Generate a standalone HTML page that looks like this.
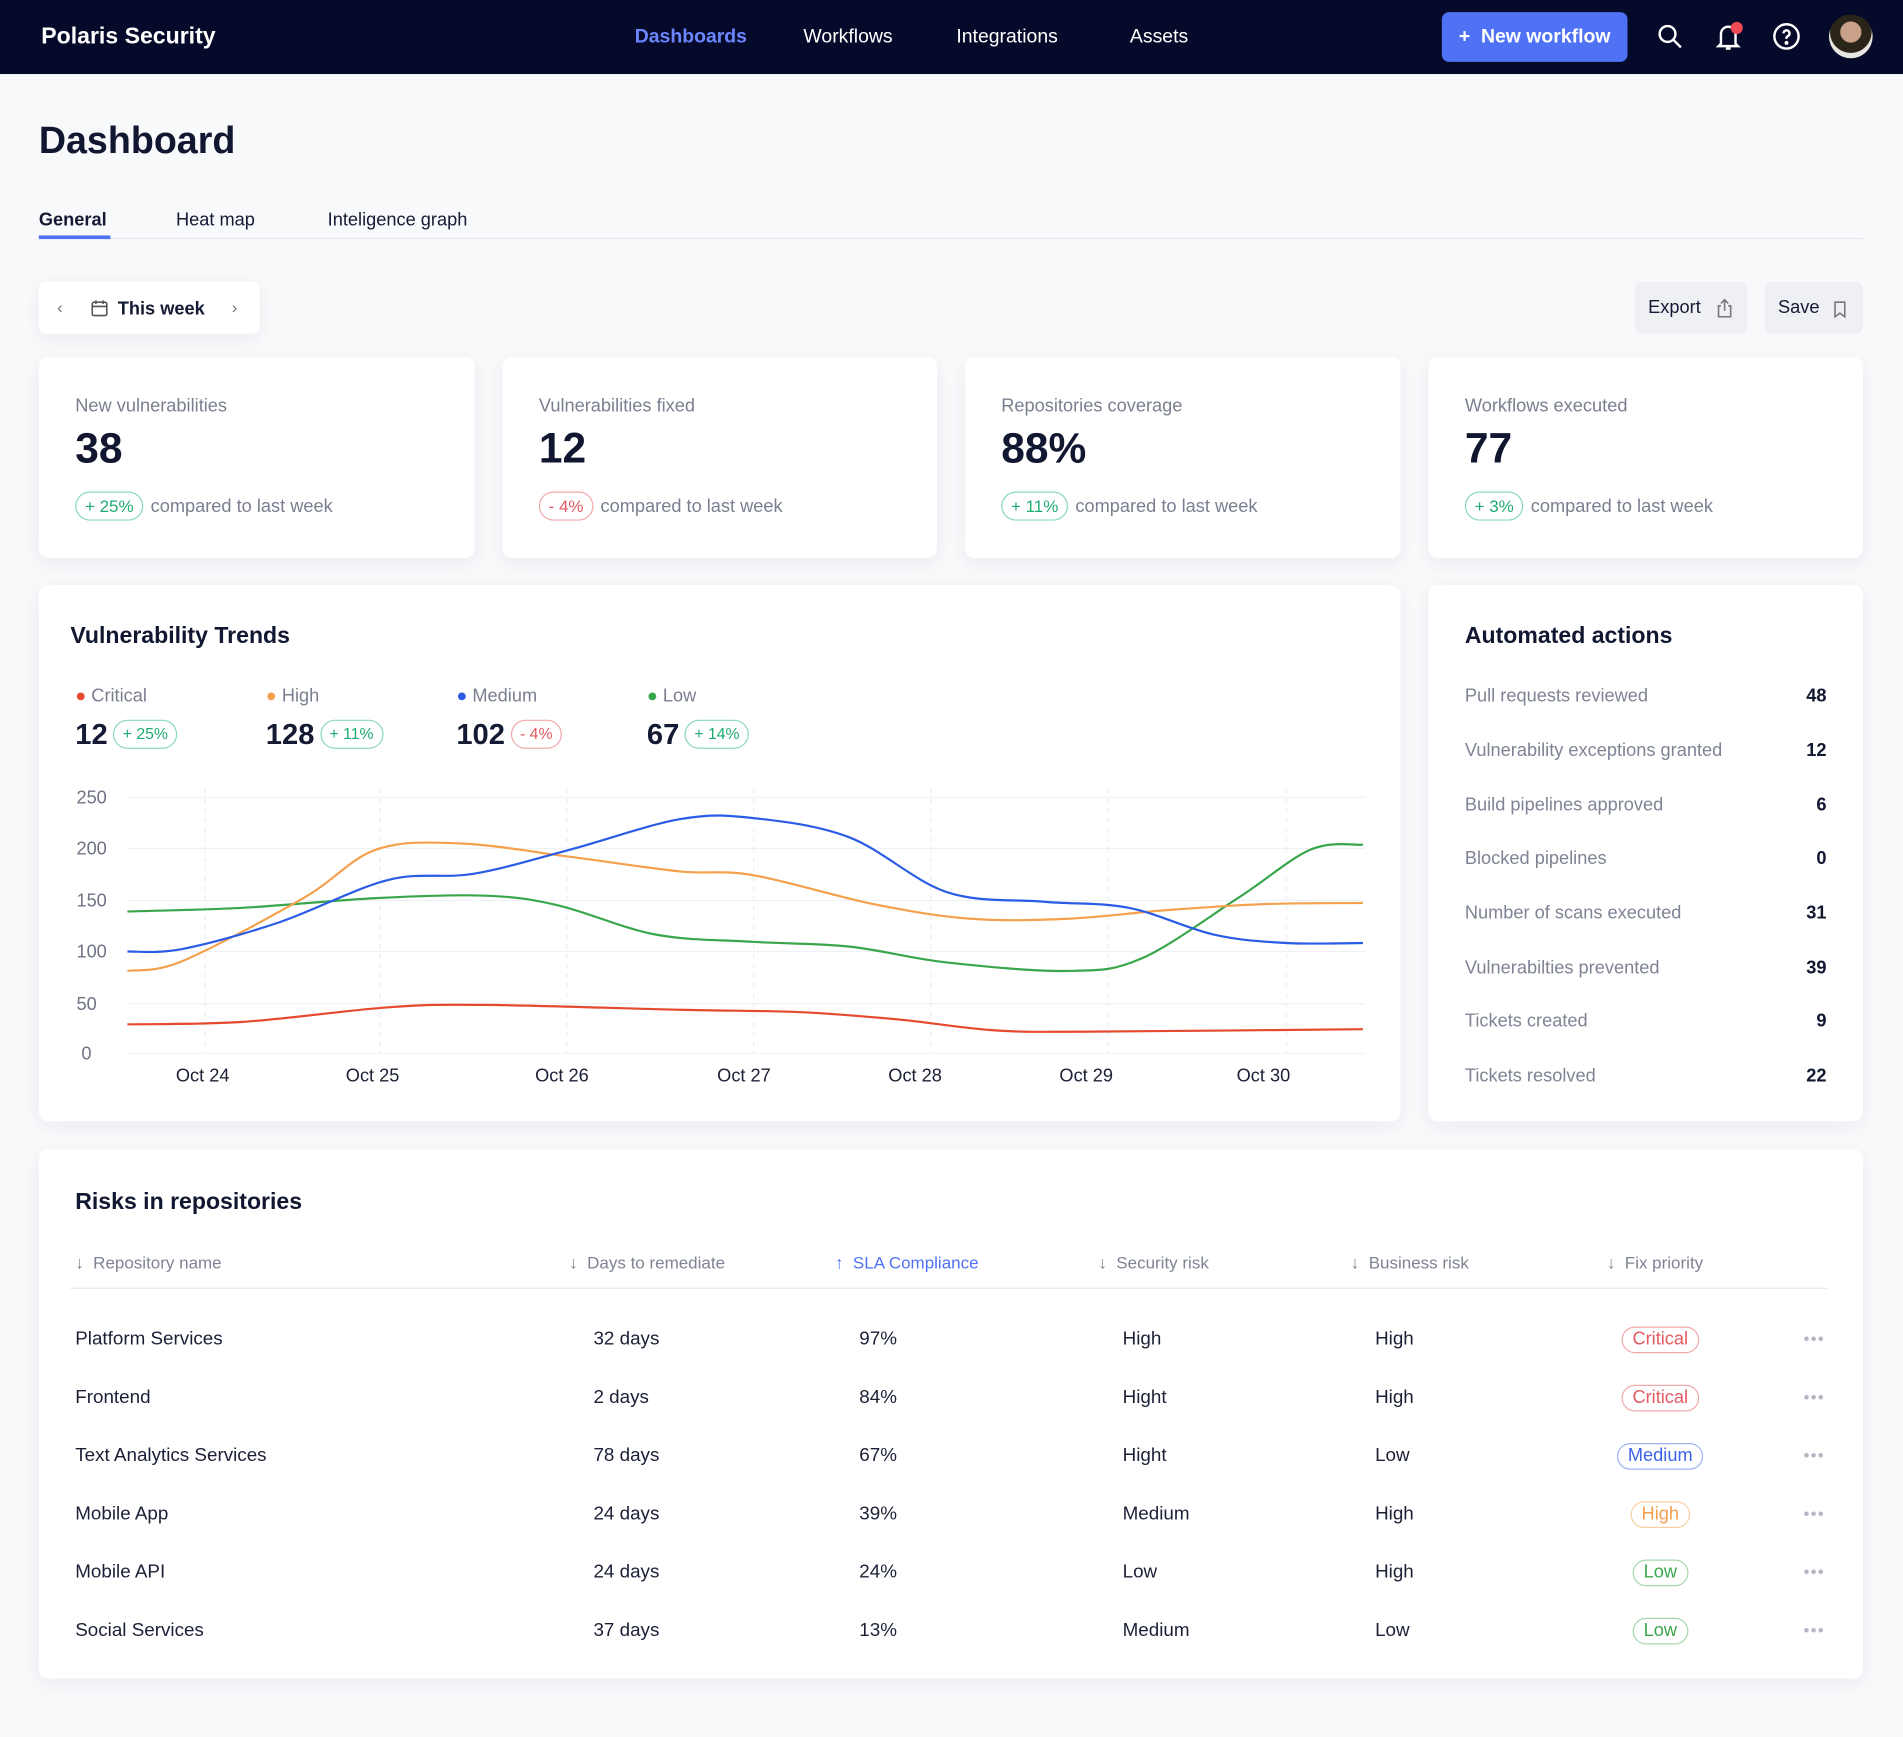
<!DOCTYPE html>
<html><head><meta charset="utf-8">
<style>
*{box-sizing:border-box;margin:0;padding:0}
html,body{width:1903px;height:1737px;overflow:hidden;background:#f8f9fb;font-family:"Liberation Sans",sans-serif;color:#141a33}
#w{position:absolute;left:0;top:0;width:1568px;height:1431px;transform:scale(1.21365);transform-origin:0 0}
.a{position:absolute;white-space:nowrap}
.nav{position:absolute;left:0;top:0;width:1568px;height:61px;background:#060a2a}
.card{position:absolute;background:#fff;border-radius:8px;box-shadow:0 4px 14px rgba(20,30,70,.06)}
.lbl{font-size:15px;color:#7a7f8f}
.num{font-size:35px;font-weight:bold;color:#111730}
.bd{display:inline-block;border:1px solid;border-radius:12px;padding:2px 7px;font-size:14px;line-height:18px}
.g{color:#1faa72;border-color:#8ad9b7}
.r{color:#e25b62;border-color:#f0a9ac}
.cmp{font-size:15px;color:#7a7f8f;margin-left:6px}
.h2{font-size:19px;font-weight:bold;color:#111730}
.aa{font-size:15px;color:#7f8494}
.av{font-size:15px;font-weight:bold;right:63px;color:#111730}
.th{font-size:14px;color:#7f8494;top:1032px}
.td{font-size:15.5px;color:#1b2036}
.pill{position:absolute;border:1px solid;border-radius:12px;font-size:15px;line-height:20px;padding:0 8px;transform:translateX(-50%)}
.dots{position:absolute;left:1486px;color:#b4b7c2;font-size:14px;letter-spacing:1px}
</style></head><body><div id="w">
<div class="nav">
<div class="a" style="left:34px;top:20px;font-size:19px;font-weight:bold;color:#fff">Polaris Security</div>
<div class="a" style="left:523px;top:22px;font-size:16px;color:#6b86ff;font-weight:bold">Dashboards</div>
<div class="a" style="left:662px;top:22px;font-size:16px;color:#fff">Workflows</div>
<div class="a" style="left:788px;top:22px;font-size:16px;color:#fff">Integrations</div>
<div class="a" style="left:931px;top:22px;font-size:16px;color:#fff">Assets</div>
<div class="a" style="left:1188px;top:10px;width:153px;height:41px;background:#4f72f5;border-radius:6px;color:#fff;font-weight:bold;font-size:16px;line-height:41px;text-align:center">+&nbsp; New workflow</div>
<svg class="a" style="left:1364px;top:18px" width="24" height="24" viewBox="0 0 24 24" fill="none" stroke="#fff" stroke-width="2"><circle cx="10" cy="10" r="6.5"/><path d="M15 15l6 6"/></svg>
<svg class="a" style="left:1412px;top:16px" width="26" height="28" viewBox="0 0 26 28" fill="none" stroke="#fff" stroke-width="2"><path d="M6 20V12a6 6 0 0 1 12 0v8l2 2H4z"/><path d="M10 24h4"/><circle cx="19" cy="7" r="5" fill="#f04a55" stroke="none"/></svg>
<svg class="a" style="left:1460px;top:18px" width="24" height="24" viewBox="0 0 24 24" fill="none" stroke="#fff" stroke-width="2"><circle cx="12" cy="12" r="10"/><path d="M9.5 9.5a2.5 2.5 0 1 1 3.5 2.3c-.7.4-1 1-1 1.7v.5"/><circle cx="12" cy="17.3" r=".6" fill="#fff"/></svg>
<div class="a" style="left:1507px;top:12px;width:36px;height:36px;border-radius:50%;background:radial-gradient(circle at 50% 40%,#c9a08a 0 30%,#2b2418 32% 60%,#e8e6e0 62%)"></div>
</div>

<div class="a" style="left:32px;top:98px;font-size:31px;font-weight:bold;color:#111730">Dashboard</div>
<div class="a" style="left:32px;top:173px;font-size:15px;font-weight:bold">General</div>
<div class="a" style="left:145px;top:173px;font-size:15px">Heat map</div>
<div class="a" style="left:270px;top:173px;font-size:15px">Inteligence graph</div>
<div class="a" style="left:32px;top:196px;width:1503px;height:1px;background:#e2e5ee"></div>
<div class="a" style="left:32px;top:194px;width:59px;height:3px;background:#4f72f5"></div>

<div class="card" style="left:32px;top:232px;width:182px;height:43px;border-radius:6px"></div>
<div class="a" style="left:47px;top:245px;font-size:14px;color:#777">&#8249;</div>
<svg class="a" style="left:74px;top:246px" width="16" height="16" viewBox="0 0 16 16" fill="none" stroke="#555" stroke-width="1.3"><rect x="2" y="3" width="12" height="11" rx="1.5"/><path d="M2 6.5h12M5 1.5v3M11 1.5v3"/></svg>
<div class="a" style="left:97px;top:246px;font-size:15px;font-weight:bold">This week</div>
<div class="a" style="left:191px;top:245px;font-size:14px;color:#777">&#8250;</div>
<div class="a" style="left:1347px;top:232px;width:93px;height:43px;background:#eef0f4;border-radius:6px;font-size:15px;line-height:43px;padding-left:11px">Export</div>
<svg class="a" style="left:1413px;top:245px" width="16" height="18" viewBox="0 0 16 18" fill="none" stroke="#777" stroke-width="1.3"><path d="M5 7H3v9h10V7h-2M8 11V2M5 5l3-3 3 3"/></svg>
<div class="a" style="left:1454px;top:232px;width:81px;height:43px;background:#eef0f4;border-radius:6px;font-size:15px;line-height:43px;padding-left:11px">Save</div>
<svg class="a" style="left:1509px;top:247px" width="14" height="16" viewBox="0 0 14 16" fill="none" stroke="#777" stroke-width="1.3"><path d="M3 2h8v12l-4-3-4 3z"/></svg>

<div class="card" style="left:32px;top:294px;width:359px;height:166px"><div class="a lbl" style="left:30px;top:32px">New vulnerabilities</div><div class="a num" style="left:30px;top:56px">38</div><div class="a" style="left:30px;top:111px"><span class="bd g">+ 25%</span><span class="cmp">compared to last week</span></div></div>
<div class="card" style="left:414px;top:294px;width:358px;height:166px"><div class="a lbl" style="left:30px;top:32px">Vulnerabilities fixed</div><div class="a num" style="left:30px;top:56px">12</div><div class="a" style="left:30px;top:111px"><span class="bd r">- 4%</span><span class="cmp">compared to last week</span></div></div>
<div class="card" style="left:795px;top:294px;width:359px;height:166px"><div class="a lbl" style="left:30px;top:32px">Repositories coverage</div><div class="a num" style="left:30px;top:56px">88%</div><div class="a" style="left:30px;top:111px"><span class="bd g">+ 11%</span><span class="cmp">compared to last week</span></div></div>
<div class="card" style="left:1177px;top:294px;width:358px;height:166px"><div class="a lbl" style="left:30px;top:32px">Workflows executed</div><div class="a num" style="left:30px;top:56px">77</div><div class="a" style="left:30px;top:111px"><span class="bd g">+ 3%</span><span class="cmp">compared to last week</span></div></div>

<div class="card" style="left:32px;top:482px;width:1122px;height:442px"></div>
<div class="a h2" style="left:58px;top:514px">Vulnerability Trends</div>
<div class="a lbl" style="left:62px;top:565px"><span style="color:#e5492f">●</span> Critical</div>
<div class="a lbl" style="left:219px;top:565px"><span style="color:#f5a04c">●</span> High</div>
<div class="a lbl" style="left:376px;top:565px"><span style="color:#2b5ce6">●</span> Medium</div>
<div class="a lbl" style="left:533px;top:565px"><span style="color:#3aa64c">●</span> Low</div>
<div class="a" style="left:62px;top:592px"><span style="font-size:24px;font-weight:bold">12</span> <span class="bd g" style="font-size:13px;vertical-align:4px">+ 25%</span></div>
<div class="a" style="left:219px;top:592px"><span style="font-size:24px;font-weight:bold">128</span> <span class="bd g" style="font-size:13px;vertical-align:4px">+ 11%</span></div>
<div class="a" style="left:376px;top:592px"><span style="font-size:24px;font-weight:bold">102</span> <span class="bd r" style="font-size:13px;vertical-align:4px">- 4%</span></div>
<div class="a" style="left:533px;top:592px"><span style="font-size:24px;font-weight:bold">67</span> <span class="bd g" style="font-size:13px;vertical-align:4px">+ 14%</span></div>
<svg class="a" style="left:0;top:0" width="1160" height="920" id="ch">
<g stroke="#f0f1f4" stroke-width="1"><path d="M105 657H1125M105 699H1125M105 742H1125M105 784H1125M105 827H1125M105 868H1125"/></g>
<g stroke="#eceef2" stroke-dasharray="4 4"><path d="M169 650V868M313 650V868M467 650V868M621 650V868M767 650V868M913 650V868M1060 650V868"/></g>
<g font-size="15" fill="#6f7485" font-family="Liberation Sans"><text x="63" y="662">250</text><text x="63" y="704">200</text><text x="63" y="747">150</text><text x="63" y="789">100</text><text x="63" y="832">50</text><text x="67" y="873">0</text></g>
<g font-size="15" fill="#1b2036" font-family="Liberation Sans" text-anchor="middle"><text x="167" y="891">Oct 24</text><text x="307" y="891">Oct 25</text><text x="463" y="891">Oct 26</text><text x="613" y="891">Oct 27</text><text x="754" y="891">Oct 28</text><text x="895" y="891">Oct 29</text><text x="1041" y="891">Oct 30</text></g>
</svg>

<div class="card" style="left:1177px;top:482px;width:358px;height:442px"></div>
<div class="a h2" style="left:1207px;top:514px">Automated actions</div>
<div class="a aa" style="left:1207px;top:565px">Pull requests reviewed</div><div class="a av" style="top:565px">48</div>
<div class="a aa" style="left:1207px;top:610px">Vulnerability exceptions granted</div><div class="a av" style="top:610px">12</div>
<div class="a aa" style="left:1207px;top:655px">Build pipelines approved</div><div class="a av" style="top:655px">6</div>
<div class="a aa" style="left:1207px;top:699px">Blocked pipelines</div><div class="a av" style="top:699px">0</div>
<div class="a aa" style="left:1207px;top:744px">Number of scans executed</div><div class="a av" style="top:744px">31</div>
<div class="a aa" style="left:1207px;top:789px">Vulnerabilties prevented</div><div class="a av" style="top:789px">39</div>
<div class="a aa" style="left:1207px;top:833px">Tickets created</div><div class="a av" style="top:833px">9</div>
<div class="a aa" style="left:1207px;top:878px">Tickets resolved</div><div class="a av" style="top:878px">22</div>

<div class="card" style="left:32px;top:947px;width:1503px;height:436px"></div>
<div class="a h2" style="left:62px;top:980px">Risks in repositories</div>
<div class="a th" style="left:62px">&#8595;&nbsp; Repository name</div>
<div class="a th" style="left:469px">&#8595;&nbsp; Days to remediate</div>
<div class="a th" style="left:688px;color:#4f72f5">&#8593;&nbsp; SLA Compliance</div>
<div class="a th" style="left:905px">&#8595;&nbsp; Security risk</div>
<div class="a th" style="left:1113px">&#8595;&nbsp; Business risk</div>
<div class="a th" style="left:1324px">&#8595;&nbsp; Fix priority</div>
<div class="a" style="left:58px;top:1061px;width:1447px;height:1px;background:#e6e8ef"></div>
<div id="rows"></div>
</div>
<script>
function cr(p){let d="M"+p[0][0]+" "+p[0][1];for(let i=0;i<p.length-1;i++){const a=p[i-1]||p[i],b=p[i],c=p[i+1],e=p[i+2]||c;d+=" C"+(b[0]+(c[0]-a[0])/6)+" "+(b[1]+(c[1]-a[1])/6)+" "+(c[0]-(e[0]-b[0])/6)+" "+(c[1]-(e[1]-b[1])/6)+" "+c[0]+" "+c[1];}return d;}
const L=[["#3aa64c",[[105,751],[200,748],[310,740],[400,738],[460,746],[540,770],[620,776],[700,780],[780,793],[880,800],[940,790],[1020,740],[1080,700],[1123,696]]],
["#f5a04c",[[105,800],[150,792],[250,740],[310,700],[380,695],[470,706],[560,718],[620,721],[720,745],[800,757],[880,757],[960,750],[1040,745],[1123,744]]],
["#2b5ce6",[[105,784],[150,782],[230,760],[320,725],[390,720],[470,700],[560,675],[620,674],[700,690],[780,735],[860,743],[930,748],[1000,770],[1060,777],[1123,777]]],
["#e5492f",[[105,844],[200,842],[320,830],[400,828],[560,832],[660,834],[740,840],[820,849],[900,850],[1123,848]]]];
const s=document.getElementById("ch");L.forEach(l=>{const p=document.createElementNS("http://www.w3.org/2000/svg","path");p.setAttribute("d",cr(l[1]));p.setAttribute("fill","none");p.setAttribute("stroke",l[0]);p.setAttribute("stroke-width","1.8");s.appendChild(p);});
const R=[["Platform Services","32 days","97%","High","High","Critical","#e25b62","#f0a9ac"],["Frontend","2 days","84%","Hight","High","Critical","#e25b62","#f0a9ac"],["Text Analytics Services","78 days","67%","Hight","Low","Medium","#3d63e6","#9fb3f3"],["Mobile App","24 days","39%","Medium","High","High","#f5a04c","#f8cfa4"],["Mobile API","24 days","24%","Low","High","Low","#3aa64c","#a7d8af"],["Social Services","37 days","13%","Medium","Low","Low","#3aa64c","#a7d8af"]];
const X=[62,489,708,925,1133];let h="";
R.forEach((r,i)=>{const y=1095+i*48;for(let j=0;j<5;j++)h+=`<div class="a td" style="left:${X[j]}px;top:${y}px">${r[j]}</div>`;h+=`<div class="pill" style="left:1368px;top:${y-2}px;color:${r[6]};border-color:${r[7]}">${r[5]}</div><div class="dots" style="top:${y}px">•••</div>`;});
document.getElementById("rows").innerHTML=h;
</script>
</body></html>
